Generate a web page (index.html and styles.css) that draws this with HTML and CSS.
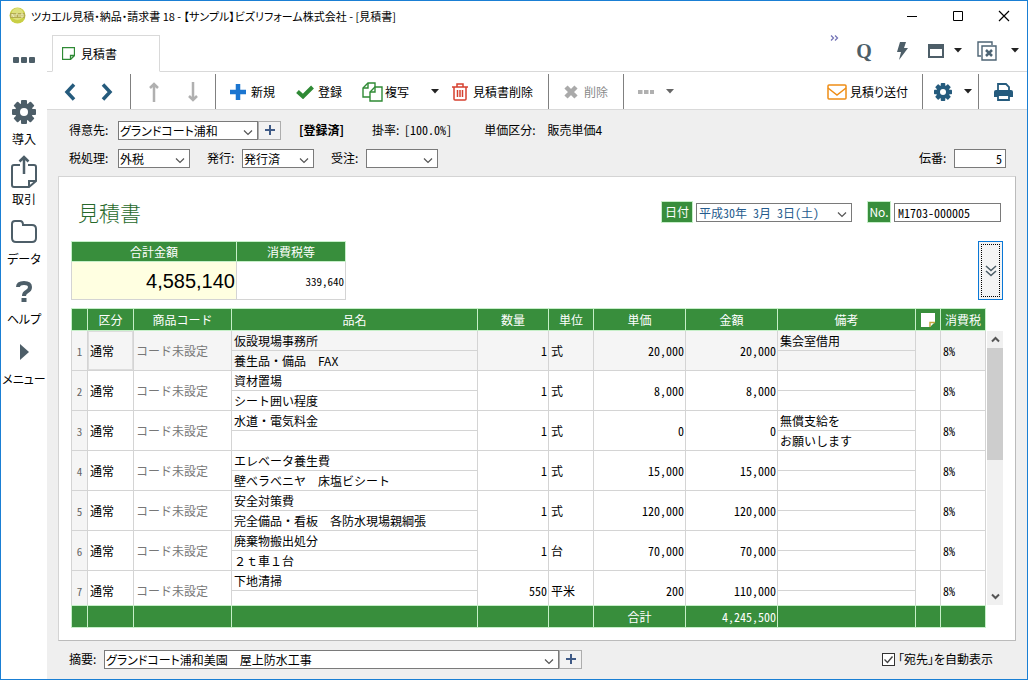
FILE: index.html
```html
<!DOCTYPE html>
<html lang="ja">
<head>
<meta charset="utf-8">
<title>ツカエル見積・納品・請求書 18</title>
<link rel="stylesheet" href="styles.css">
</head>
<body>
<div class="window">
  <header class="titlebar">
    <svg class="app-icon" width="17" height="17" viewBox="0 0 17 17"><circle cx="8.500" cy="8.500" r="8" fill="#c9cf45"/><circle cx="8.500" cy="7" r="6" fill="#dde07c"/><path d="M1 6h15v5H1z" fill="#b3ac4f"/><path d="M3 10V7l2 3V7M7 7v3M7 7h2M10 7v3M12 7h2v3h-2z" stroke="#f3f2c0" fill="none"/></svg>
    <h1 class="app-title">ツカエル見積・納品・請求書 18 - 【サンプル】ビズリフォーム株式会社 - [見積書]</h1>
    <div class="win-controls">
      <button class="win-btn" aria-label="最小化"><svg width="12" height="12"><path d="M1 6.500h10" stroke="#000"/></svg></button>
      <button class="win-btn" aria-label="最大化"><svg width="12" height="12"><path d="M1.500 1.500h9v9h-9z" stroke="#000" fill="none"/></svg></button>
      <button class="win-btn" aria-label="閉じる"><svg width="12" height="12"><path d="M1 1l10 10M11 1L1 11" stroke="#000" stroke-width="1.200"/></svg></button>
    </div>
  </header>
  <div class="shell">
    <nav class="sidebar">
      <button class="side-top" aria-label="その他"><svg width="24" height="8"><g fill="#4d5e68"><rect x="1" y="1" width="6" height="6" rx="1"/><rect x="9" y="1" width="6" height="6" rx="1"/><rect x="17" y="1" width="6" height="6" rx="1"/></g></svg></button>
      <button class="side-item"><span class="side-icon"><svg width="24" height="24" viewBox="-12 -12 24 24"><g fill="#4d5e68"><rect x="-3" y="-12" width="6" height="24" rx="1"/><rect x="-12" y="-3" width="24" height="6" rx="1"/><rect x="-3" y="-12" width="6" height="24" rx="1" transform="rotate(45)"/><rect x="-3" y="-12" width="6" height="24" rx="1" transform="rotate(-45)"/><circle r="9"/></g><circle r="4" fill="#fff"/></svg></span>導入</button>
      <button class="side-item"><span class="side-icon"><svg width="26" height="34" viewBox="0 0 26 34"><g fill="none" stroke="#4d5e68" stroke-width="2"><path d="M9 10H3q-2 0-2 2v18q0 2 2 2h15l7-6V12q0-2-2-2h-6"/><path d="M18 32v-6h7"/><path d="M13 19V3M8.500 6.500L13 2l4.500 4.500" stroke-width="2.500"/></g></svg></span>取引</button>
      <button class="side-item"><span class="side-icon"><svg width="26" height="24" viewBox="0 0 26 24"><path d="M1 4q0-3 3-3h5q3 0 3 4h9q4 0 4 4v9q0 4-4 4H5q-4 0-4-4z" fill="none" stroke="#4d5e68" stroke-width="2"/></svg></span>データ</button>
      <button class="side-item"><span class="side-icon"><svg width="16" height="22" viewBox="0 0 16 22"><path d="M2 6q0-4 6-4t6 4q0 3-3 4.500T8 15" fill="none" stroke="#4d5e68" stroke-width="4"/><rect x="5.500" y="17" width="5" height="4" fill="#4d5e68"/></svg></span>ヘルプ</button>
      <button class="side-item"><span class="side-icon"><svg width="10" height="16"><path d="M1 0l9 8-9 8z" fill="#4d5e68"/></svg></span>メニュー</button>
    </nav>
    <main class="main">
      <div class="tabbar">
        <button class="tab"><svg width="13" height="13" viewBox="0 0 13 13"><path d="M.5.500h12v8l-4 4h-8zM8.500 12.500v-4h4" fill="none" stroke="#2f8a35" stroke-width="1.300"/></svg>見積書</button>
        <div class="quick">
          <span class="more"><svg width="9" height="6"><path d="M1 .5L3.500 3 1 5.500M5 .5L7.500 3 5 5.500" fill="none" stroke="#7676b8" stroke-width="1.300"/></svg></span>
          <button class="quick-btn quick-q" aria-label="検索">Q</button>
          <button class="quick-btn" aria-label="クイック"><svg width="12" height="20" viewBox="0 0 12 20"><path d="M4 1h6L8 7h4L3 19l2-8H1z" fill="#4d5e68"/></svg></button>
          <button class="quick-btn wide" aria-label="ウィンドウ"><svg width="16" height="14"><path d="M1 1h14v12H1z" fill="none" stroke="#4d5e68" stroke-width="2"/><path d="M1 1h14v4H1z" fill="#4d5e68"/></svg><svg class="caret" width="8" height="5"><path d="M0 0h8L4 4.500z"/></svg></button>
          <button class="quick-btn wide" aria-label="すべて閉じる"><svg width="20" height="20" viewBox="0 0 20 20"><g fill="none" stroke="#4d6474" stroke-width="1.400"><path d="M4 15H1V1h14v3"/><path d="M5 5h14v14H5z"/><path d="M9 9l6 6M15 9l-6 6" stroke-width="2.500"/></g></svg><svg class="caret" width="8" height="5"><path d="M0 0h8L4 4.500z"/></svg></button>
        </div>
      </div>
      <div class="toolbar">
        <div class="tool-group nav">
          <button class="step" aria-label="前へ"><svg width="12" height="18"><path d="M10 1.500L3 9l7 7.500" fill="none" stroke="#255b7d" stroke-width="3.500"/></svg></button>
          <button class="step" aria-label="次へ"><svg width="12" height="18"><path d="M2 1.500L9 9l-7 7.500" fill="none" stroke="#255b7d" stroke-width="3.500"/></svg></button>
        </div>
        <div class="tool-group arrows">
          <button class="step" aria-label="上へ"><svg width="10" height="20"><path d="M5 20V2M1 6l4-4 4 4" fill="none" stroke="#b0b0b0" stroke-width="2.500"/></svg></button>
          <button class="step" aria-label="下へ"><svg width="10" height="20"><path d="M5 0v18M1 14l4 4 4-4" fill="none" stroke="#b0b0b0" stroke-width="2.500"/></svg></button>
        </div>
        <div class="tool-group">
          <button class="tool"><span class="tool-icon"><svg width="16" height="16"><path d="M8 0v16M0 8h16" stroke="#1b75d0" stroke-width="4.500"/></svg></span>新規</button>
          <button class="tool"><span class="tool-icon"><svg width="18" height="14"><path d="M1.500 6.500L7 11.500 16.500 2" fill="none" stroke="#2f8a35" stroke-width="4"/></svg></span>登録</button>
          <button class="tool"><span class="tool-icon"><svg width="21" height="20" viewBox="0 0 21 20"><g fill="#fff" stroke="#2f8a35" stroke-width="1.400"><path d="M8 15H1V6l5-5h7v14z"/><path d="M1 6h5V1" fill="none"/><path d="M8 19V10l5-5h7v14z"/><path d="M8 10h5V5" fill="none"/></g></svg></span>複写</button>
          <button class="drop" aria-label="複写メニュー"><svg class="caret" width="8" height="5"><path d="M0 0h8L4 4.500z"/></svg></button>
          <button class="tool tight"><span class="tool-icon"><svg width="16" height="18" viewBox="0 0 16 18"><g fill="none" stroke="#d6402f" stroke-width="1.500"><path d="M0 4h16M5 4V1h6v3M2 4v12q0 1 1 1h10q1 0 1-1V4M5.500 7v7M8 7v7M10.500 7v7"/></g></svg></span>見積書削除</button>
        </div>
        <div class="tool-group">
          <button class="tool" disabled><span class="tool-icon"><svg width="14" height="14"><path d="M2 2l10 10M12 2L2 12" stroke="#aaa" stroke-width="4.500"/></svg></span>削除</button>
        </div>
        <div class="tool-group last">
          <button class="tool" disabled aria-label="その他"><span class="tool-icon"><svg width="16" height="4"><path d="M0 2h4.500M6 2h4.500M12 2h4.500" stroke="#b0b0b0" stroke-width="4"/></svg></span></button>
          <button class="drop gray" aria-label="その他メニュー"><svg class="caret" width="8" height="5"><path d="M0 0h8L4 4.500z"/></svg></button>
        </div>
        <div class="tool-group push">
          <button class="tool"><span class="tool-icon"><svg width="20" height="16" viewBox="0 0 20 16"><g fill="none" stroke="#ee8d16" stroke-width="1.500"><rect x="1" y="1" width="18" height="14" rx="1"/><path d="M1 4l9 7 9-7"/></g></svg></span>見積り送付</button>
        </div>
        <div class="tool-group settings">
          <button class="tool" aria-label="設定"><span class="tool-icon"><svg width="18" height="18" viewBox="-12 -12 24 24"><g fill="#255b7d"><rect x="-3" y="-12" width="6" height="24" rx="1"/><rect x="-12" y="-3" width="24" height="6" rx="1"/><rect x="-3" y="-12" width="6" height="24" rx="1" transform="rotate(45)"/><rect x="-3" y="-12" width="6" height="24" rx="1" transform="rotate(-45)"/><circle r="9"/></g><circle r="4" fill="#fff"/></svg></span></button>
          <button class="drop" aria-label="設定メニュー"><svg class="caret" width="8" height="5"><path d="M0 0h8L4 4.500z"/></svg></button>
        </div>
        <div class="tool-group last print">
          <button class="tool" aria-label="印刷"><span class="tool-icon"><svg width="19" height="18" viewBox="0 0 19 18"><path d="M4 8V1h8l3 3v4" fill="none" stroke="#255b7d" stroke-width="1.800"/><path d="M2 7h15q2 0 2 2v5H0V9q0-2 2-2z" fill="#255b7d"/><path d="M4 12h11v5H4z" fill="#fff" stroke="#255b7d" stroke-width="1.800"/></svg></span></button>
        </div>
      </div>
      <div class="content">
        <div class="fields">
          <div class="field-row">
            <label class="lead" for="client">得意先:</label>
            <select id="client" class="combo combo-client"><option>グランドコート浦和</option></select>
            <button class="add" aria-label="得意先を追加"><svg width="10" height="10"><path d="M5 0v10M0 5h10" stroke="#3f5a86" stroke-width="2"/></svg></button>
            <strong class="status">[登録済]</strong>
            <span class="info">掛率: <span class="half">[100.0%]</span></span>
            <span class="info">単価区分:</span>
            <span class="info-value">販売単価4</span>
          </div>
          <div class="field-row">
            <label class="lead" for="tax">税処理:</label>
            <select id="tax" class="combo combo-small"><option>外税</option></select>
            <label class="next" for="issue">発行:</label>
            <select id="issue" class="combo combo-small"><option>発行済</option></select>
            <label class="next" for="order">受注:</label>
            <select id="order" class="combo combo-small"><option></option></select>
            <label class="slip" for="slip">伝番:</label>
            <input id="slip" class="box box-slip" value="5">
          </div>
        </div>
        <section class="panel">
          <div class="panel-head">
            <h2 class="doc-title">見積書</h2>
            <label class="tag" for="date">日付</label>
            <select id="date" class="combo combo-date"><option>平成30年 3月 3日(土)</option></select>
            <label class="tag tag-no" for="docno">No.</label>
            <input id="docno" class="box box-no" value="M1703-000005">
          </div>
          <div class="summary-row">
            <table class="summary">
              <thead><tr><th class="sum-total">合計金額</th><th class="sum-tax">消費税等</th></tr></thead>
              <tbody><tr><td class="grand">4,585,140</td><td class="taxes">339,640</td></tr></tbody>
            </table>
            <button class="expand" aria-label="展開"><svg width="12" height="12"><path d="M1 1l5 4.500L11 1M1 6l5 4.500L11 6" fill="none" stroke="#4d5e68" stroke-width="1.600"/></svg></button>
          </div>
          <div class="grid-area">
            <div class="grid-view">
              <table class="grid">
                <colgroup><col class="c-idx"><col class="c-kind"><col class="c-code"><col><col class="c-qty"><col class="c-unit"><col class="c-num"><col class="c-num"><col class="c-note"><col class="c-memo"><col class="c-tax"></colgroup>
                <thead><tr><th></th><th>区分</th><th>商品コード</th><th>品名</th><th>数量</th><th>単位</th><th>単価</th><th>金額</th><th>備考</th><th class="memo"><svg width="14" height="14"><path d="M0 0h14v9l-5 5H0z" fill="#fff"/><path d="M9 14V9.500h5" fill="none" stroke="#c5a83c" stroke-width="1.500"/></svg></th><th>消費税</th></tr></thead>
                <tbody>
                  <tr class="current"><td class="idx">1</td><td class="kind">通常</td><td class="code">コード未設定</td><td class="pair"><div>仮設現場事務所</div><div>養生品・備品　FAX</div></td><td class="num">1</td><td>式</td><td class="num">20,000</td><td class="num">20,000</td><td class="pair"><div>集会室借用</div><div></div></td><td></td><td class="half">8%</td></tr>
                  <tr><td class="idx">2</td><td class="kind">通常</td><td class="code">コード未設定</td><td class="pair"><div>資材置場</div><div>シート囲い程度</div></td><td class="num">1</td><td>式</td><td class="num">8,000</td><td class="num">8,000</td><td class="pair"><div></div><div></div></td><td></td><td class="half">8%</td></tr>
                  <tr><td class="idx">3</td><td class="kind">通常</td><td class="code">コード未設定</td><td class="pair"><div>水道・電気料金</div><div></div></td><td class="num">1</td><td>式</td><td class="num">0</td><td class="num">0</td><td class="pair"><div>無償支給を</div><div>お願いします</div></td><td></td><td class="half">8%</td></tr>
                  <tr><td class="idx">4</td><td class="kind">通常</td><td class="code">コード未設定</td><td class="pair"><div>エレベータ養生費</div><div>壁ベラベニヤ　床塩ビシート</div></td><td class="num">1</td><td>式</td><td class="num">15,000</td><td class="num">15,000</td><td class="pair"><div></div><div></div></td><td></td><td class="half">8%</td></tr>
                  <tr><td class="idx">5</td><td class="kind">通常</td><td class="code">コード未設定</td><td class="pair"><div>安全対策費</div><div>完全備品・看板　各防水現場親綱張</div></td><td class="num">1</td><td>式</td><td class="num">120,000</td><td class="num">120,000</td><td class="pair"><div></div><div></div></td><td></td><td class="half">8%</td></tr>
                  <tr><td class="idx">6</td><td class="kind">通常</td><td class="code">コード未設定</td><td class="pair"><div>廃棄物搬出処分</div><div>２ｔ車１台</div></td><td class="num">1</td><td>台</td><td class="num">70,000</td><td class="num">70,000</td><td class="pair"><div></div><div></div></td><td></td><td class="half">8%</td></tr>
                  <tr><td class="idx">7</td><td class="kind">通常</td><td class="code">コード未設定</td><td class="pair"><div>下地清掃</div><div></div></td><td class="num">550</td><td>平米</td><td class="num">200</td><td class="num">110,000</td><td class="pair"><div></div><div></div></td><td></td><td class="half">8%</td></tr>
                </tbody>
                <tfoot><tr><td></td><td></td><td></td><td></td><td></td><td></td><td class="sum-label">合計</td><td class="num">4,245,500</td><td></td><td></td><td></td></tr></tfoot>
              </table>
            </div>
            <div class="scroll">
              <button class="scroll-btn" aria-label="上へスクロール"><svg width="9" height="7"><path d="M1 5.500L4.500 2 8 5.500" fill="none" stroke="#555" stroke-width="2"/></svg></button>
              <div class="thumb"></div>
              <button class="scroll-btn down" aria-label="下へスクロール"><svg width="9" height="7"><path d="M1 1.500L4.500 5 8 1.500" fill="none" stroke="#555" stroke-width="2"/></svg></button>
            </div>
          </div>
        </section>
        <footer class="field-row bottom">
          <label class="summary-label" for="remark">摘要:</label>
          <select id="remark" class="combo combo-remark"><option>グランドコート浦和美園　屋上防水工事</option></select>
          <button class="add" aria-label="摘要を追加"><svg width="10" height="10"><path d="M5 0v10M0 5h10" stroke="#3f5a86" stroke-width="2"/></svg></button>
          <label class="auto"><input type="checkbox" class="check" checked>「宛先」を自動表示</label>
        </footer>
      </div>
    </main>
  </div>
</div>
</body>
</html>
```

FILE: styles.css
```css
* { box-sizing: border-box; }

body {
  margin: 0;
  font: 12px/20px "Noto Sans CJK JP", sans-serif;
  font-feature-settings: "palt";
  color: #000;
  background: #fff;
}

button, input, select {
  margin: 0;
  padding: 0;
  border: 0;
  background: none;
  font: inherit;
  font-feature-settings: inherit;
  color: inherit;
}

button { cursor: default; }
svg { display: block; flex: none; }
h1, h2 { margin: 0; font-weight: 400; }

.window {
  display: flex;
  flex-direction: column;
  height: 100vh;
  border: 1px solid #1a7fd4;
}

/* Title bar */
.titlebar { display: flex; align-items: center; height: 29px; padding-left: 8px; flex: none; }
.app-title { margin-left: 5px; font-size: 11px; white-space: nowrap; }
.win-controls { display: flex; margin-left: auto; }
.win-btn { display: flex; align-items: center; justify-content: center; width: 46px; height: 28px; }

.shell { display: flex; flex: 1; min-height: 0; }

/* Sidebar */
.sidebar { width: 46px; flex: none; display: flex; flex-direction: column; gap: 6px; padding-top: 14px; }
.side-top { display: flex; align-items: center; justify-content: center; height: 32px; margin-bottom: 14px; }
.side-item { display: flex; flex-direction: column; align-items: center; line-height: 22px; white-space: nowrap; }
.side-icon { display: flex; align-items: center; justify-content: center; height: 32px; }

.main { display: flex; flex-direction: column; flex: 1; min-width: 0; }

/* Tabs */
.tabbar { display: flex; align-items: flex-end; height: 42px; flex: none; padding-left: 5px; border-bottom: 1px solid #d9d9d9; }
.tab {
  display: flex;
  align-items: center;
  gap: 6px;
  width: 108px;
  height: 37px;
  margin-bottom: -1px;
  padding-left: 9px;
  border: 1px solid #d9d9d9;
  border-bottom-color: #fff;
  background: #fff;
}
.quick { display: flex; align-items: center; margin-left: auto; height: 41px; padding-right: 8px; }
.more { align-self: flex-start; margin: 5px 6px 0 0; }
.quick-btn { display: flex; align-items: center; justify-content: center; width: 38px; height: 32px; }
.quick-btn.wide { width: auto; gap: 10px; margin-left: 7px; }
.quick-btn.wide + .wide { margin-left: 15px; gap: 14px; }
.quick-q { font: bold 20px/32px "Liberation Serif", serif; color: #4d5e68; }
.caret { fill: #222; }

/* Toolbar */
.toolbar { display: flex; height: 38px; flex: none; border-bottom: 1px solid #d9d9d9; padding-top: 2px; }
.tool-group { display: flex; align-items: center; padding: 0 15px 0 12px; border-right: 1px solid #808080; }
.tool-group.nav { padding: 0 5px 0 4px; }
.tool-group.arrows { padding: 0 3px; }
.tool-group.last { border-right: 0; }
.tool-group.push { margin-left: auto; padding-right: 14px; }
.tool-group.settings { padding: 0 0 0 10px; }
.tool-group.print { padding: 0 14px; }
.step { display: flex; align-items: center; justify-content: center; width: 37px; height: 32px; }
.arrows .step { width: 39px; }
.tool { display: flex; align-items: center; gap: 3px; height: 32px; white-space: nowrap; }
.tool + .tool { margin-left: 20px; }
.tool:disabled { color: #8a8a8a; }
.tool-icon { display: flex; align-items: center; justify-content: center; width: 20px; }
.drop { display: flex; align-items: center; justify-content: center; width: 20px; height: 32px; }
.tool + .drop { margin-left: 4px; }
.tool:nth-child(3) + .drop { margin-left: 16px; }
.settings .tool + .drop { margin-left: 5px; }
.tool.tight { margin-left: 5px; }
.drop.gray .caret { fill: #666; }

/* Content */
.content { display: flex; flex-direction: column; flex: 1; min-height: 0; padding: 10px 11px 10px; background: #efefef; }
.fields { display: flex; flex-direction: column; gap: 8px; padding: 0 10px 8px 11px; flex: none; }
.field-row { display: flex; align-items: center; height: 20px; white-space: nowrap; }
.lead { width: 49px; }
.next { width: 35px; margin-left: 17px; }
.combo {
  appearance: none;
  height: 19px;
  padding: 0 20px 0 1px;
  border: 1px solid #7a7a7a;
  line-height: 17px;
  background: #fff url("data:image/svg+xml,%3Csvg xmlns='http://www.w3.org/2000/svg' width='10' height='6'%3E%3Cpath d='M1 .5l4 4 4-4' fill='none' stroke='%23555' stroke-width='1.200'/%3E%3C/svg%3E") no-repeat right 4px bottom 3px;
}
.combo-client { width: 140px; }
.combo-small { width: 72px; }
.combo-date { width: 156px; padding-left: 2px; color: #255b8d; font-feature-settings: "hwid"; }
.combo-remark { width: 455px; }
.add { display: flex; align-items: center; justify-content: center; width: 23px; height: 19px; border: 1px solid #adadad; background: #f2f2f2; }
.status { margin-left: 18px; }
.info { margin-left: 28px; }
.info + .info { margin-left: 32px; }
.info-value { margin-left: 12px; }
.half { margin-left: 2px; font-feature-settings: "hwid"; }
.slip { margin-left: auto; width: 35px; }
.box { height: 19px; padding: 0 3px; border: 1px solid #7a7a7a; background: #fff; line-height: 17px; font-feature-settings: "hwid"; }
.box-slip { width: 52px; text-align: right; }
.box-no { width: 107px; }

/* Document panel */
.panel {
  display: flex;
  flex-direction: column;
  flex: 1;
  min-height: 0;
  padding: 20px 12px 12px;
  border: 1px solid #d4d4d4;
  border-right-color: #bbb;
  border-bottom-color: #bbb;
  background: #fff;
}
.panel-head { display: flex; align-items: center; height: 30px; padding-right: 2px; margin-bottom: 14px; flex: none; }
.doc-title { margin: 0 auto 0 7px; font-size: 21px; font-weight: 300; color: #27692b; }
.tag { width: 32px; height: 22px; margin-right: 3px; border: 1px solid #c6efc8; line-height: 20px; text-align: center; color: #fff; background: #388e3c; }
.tag-no { width: 24px; margin-left: 15px; }

.summary-row { display: flex; justify-content: space-between; height: 59px; margin-bottom: 8px; flex: none; }
.summary { border-collapse: collapse; table-layout: fixed; width: 275px; }
.summary th { height: 20px; padding: 0; border: 1px solid #c6efc8; font-weight: 400; line-height: 18px; color: #fff; background: #388e3c; }
.sum-total { width: 165px; }
.summary td { padding: 0 1px; border: 1px solid #d4d4d4; text-align: right; }
.summary .grand { font: 20px/24px "Liberation Sans", sans-serif; background: #ffffe1; }
.taxes { font-size: 11px; font-feature-settings: "hwid"; }
.expand {
  display: flex;
  align-items: center;
  justify-content: center;
  width: 25px;
  border: 1px solid #0a78d7;
  background: #f4f4f4;
  outline: 1px dotted #000;
  outline-offset: -4px;
}

.grid-area { display: flex; flex: 1; min-height: 0; }
.grid-view { flex: 1; min-width: 0; overflow-y: auto; scrollbar-width: none; }
.grid { width: 100%; table-layout: fixed; border-collapse: separate; border-spacing: 0; font-feature-settings: normal; }
.c-idx { width: 17px; }
.c-kind { width: 46px; }
.c-code { width: 98px; }
.c-qty { width: 71px; }
.c-unit { width: 45px; }
.c-num { width: 92px; }
.c-note { width: 138px; }
.c-memo { width: 25px; }
.c-tax { width: 45px; }
.grid th {
  position: sticky;
  top: 0;
  height: 23px;
  padding: 0;
  border: solid #c6efc8;
  border-width: 1px 1px 1px 0;
  font-weight: 400;
  color: #fff;
  background: #388e3c;
}
.grid th:first-child, .grid tfoot td:first-child { border-left-width: 1px; }
.memo svg { margin: 0 auto; }
.grid tbody td { height: 40px; padding: 0 0 0 2px; border: solid #d4d4d4; border-width: 0 1px 1px 0; white-space: nowrap; }
.grid tbody td:first-child { border-left-width: 1px; }
.grid tbody .current td { background: #f5f5f5; }
.grid tbody .idx { padding: 0; text-align: center; font-size: 11px; color: #666; background: #f5f5f5; font-feature-settings: "hwid"; }
.current .kind { box-shadow: inset 0 0 0 1px #ddd; }
.grid tbody .code { color: #777; }
.grid tbody .pair { padding: 0; }
.pair div { height: 19px; padding-left: 2px; line-height: 19px; }
.pair div:first-child { height: 20px; border-bottom: 1px solid #d4d4d4; }
.grid tbody .num, .grid tfoot .num { padding: 0 1px 0 0; text-align: right; font-feature-settings: "hwid"; }
.grid tfoot td {
  position: sticky;
  bottom: 0;
  height: 23px;
  padding: 0;
  border: solid #c6efc8;
  border-width: 1px 1px 1px 0;
  color: #fff;
  background: #388e3c;
}
.sum-label { text-align: center; }

.scroll { display: flex; flex-direction: column; width: 16px; margin: 23px 0 23px 1px; background: #f0f0f0; }
.scroll-btn { display: flex; align-items: center; justify-content: center; height: 17px; flex: none; }
.thumb { height: 41%; background: #cdcdcd; }
.scroll-btn.down { margin-top: auto; }

/* Footer row */
.bottom { margin-top: 8px; padding: 0 23px 0 11px; flex: none; }
.summary-label { width: 35px; }
.auto { display: flex; align-items: center; gap: 3px; margin-left: auto; }
.check {
  appearance: none;
  width: 13px;
  height: 13px;
  border: 1px solid #333;
  background: #fff url("data:image/svg+xml,%3Csvg xmlns='http://www.w3.org/2000/svg' width='11' height='11'%3E%3Cpath d='M1.500 5.500l3 3 5-6' fill='none' stroke='%23444' stroke-width='1.400'/%3E%3C/svg%3E") center no-repeat;
}
```
